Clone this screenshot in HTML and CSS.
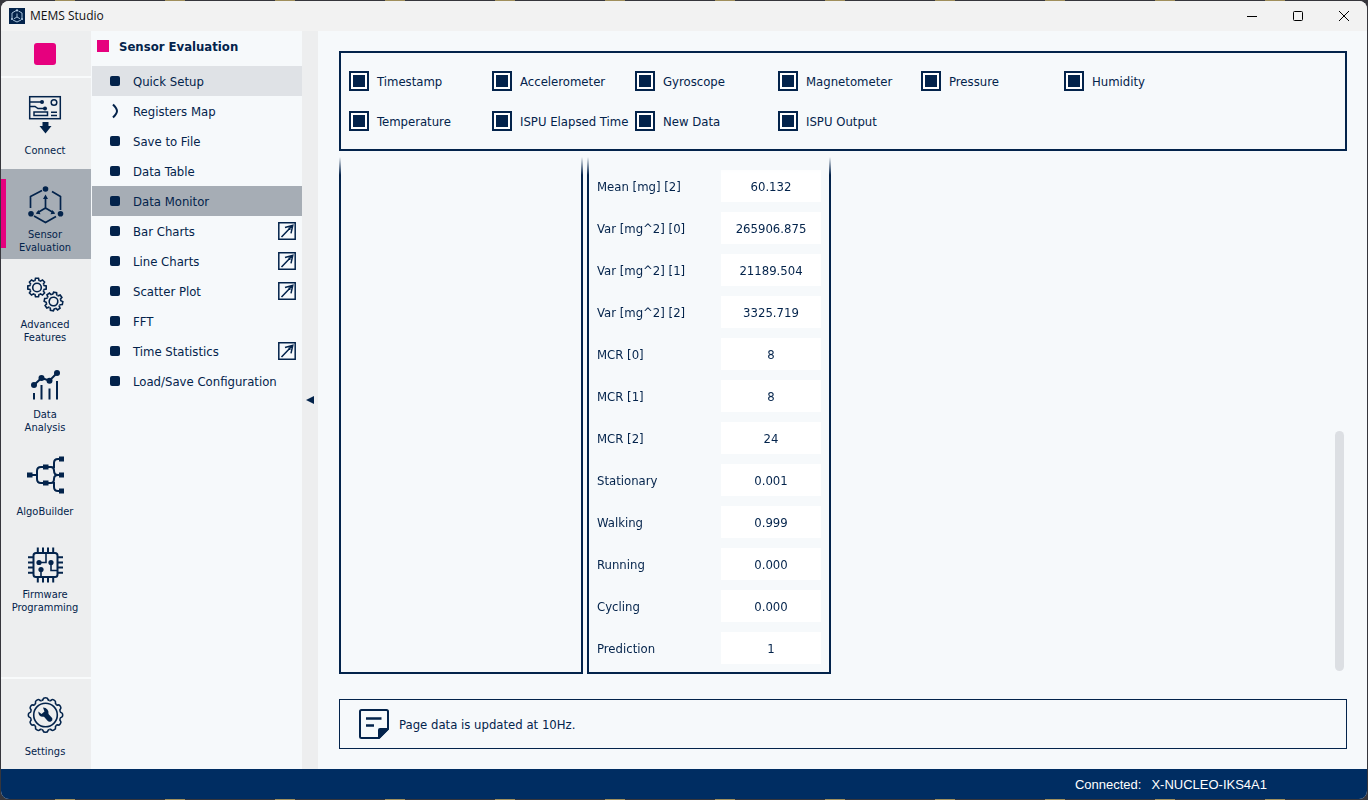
FILE: index.html
```html
<!DOCTYPE html>
<html lang="en">
<head>
<meta charset="utf-8">
<title>MEMS Studio</title>
<link rel="stylesheet" href="styles.css">
</head>
<body>
<svg class="defs" aria-hidden="true">
  <defs>
    <path id="tooth" d="M-2.8 -6.8L-2 -7.1L-1.5 -9.2H1.5L2 -7.1L2.8 -6.8"/>
    <g id="gear">
      <use href="#tooth"/><use href="#tooth" transform="rotate(45)"/><use href="#tooth" transform="rotate(90)"/><use href="#tooth" transform="rotate(135)"/><use href="#tooth" transform="rotate(180)"/><use href="#tooth" transform="rotate(225)"/><use href="#tooth" transform="rotate(270)"/><use href="#tooth" transform="rotate(315)"/>
      <circle r="4.3"/>
    </g>
    <path id="wave" d="M-3.9 -14.5Q-2.5 -14.8 -2.3 -16Q-2.1 -17.2 0 -17.2Q2.1 -17.2 2.3 -16Q2.5 -14.8 3.9 -14.5"/>
    <g id="quarter"><use href="#wave"/><use href="#wave" transform="rotate(30)"/><use href="#wave" transform="rotate(60)"/></g>
    <symbol id="popout" viewBox="0 0 20 20"><path fill="none" stroke="currentColor" stroke-width="1.500" d="M1.800 1.800H18.200V18.200H1.800ZM4.500 16L15.500 4.500M8 6.500L15.800 4.300L14 12.300M11.500 6.800L13.500 8.500"/></symbol>
  </defs>
</svg>
<div class="window">
  <header class="titlebar">
    <svg class="app-icon" viewBox="0 0 16 16"><rect width="16" height="16" fill="#03234b"/><g fill="none" stroke="#b9d3ea" stroke-width=".9"><path d="M7 2.600L3 5V10M9.500 3L13 5V10M4 12L8 14L12 12M8 5.500V9L5 10.700M8 9L11 10.700"/></g><g fill="#b9d3ea"><circle cx="8" cy="2.400" r="1.100"/><circle cx="3" cy="11" r="1.100"/><circle cx="13" cy="11" r="1.100"/></g></svg>
    <h1 class="app-name">MEMS Studio</h1>
    <div class="window-buttons">
      <button aria-label="Minimize"><svg viewBox="0 0 12 12"><path d="M1 6.500H11"/></svg></button>
      <button aria-label="Maximize"><svg viewBox="0 0 12 12"><rect x="1.500" y="1.500" width="9" height="9" rx="1"/></svg></button>
      <button aria-label="Close"><svg viewBox="0 0 12 12"><path d="M1 1L11 11M11 1L1 11"/></svg></button>
    </div>
  </header>

  <div class="workspace">
    <nav class="rail" aria-label="Sections">
      <div class="rail-stop"><button class="stop" aria-label="Stop"></button></div>
      <button class="rail-item">
        <svg class="rail-icon" viewBox="0 0 40 40"><g fill="none" stroke="currentColor" stroke-width="1.500"><rect x="4.700" y="2.700" width="30.600" height="22"/><path d="M5 8H16M5 12.500H10L13 14.500H19"/><circle cx="29" cy="8.500" r="2.800"/><path d="M9 18H22.500V21.500H9ZM26 18.300H32M26 21.500H32"/></g><g fill="currentColor"><circle cx="17" cy="8" r="2"/><circle cx="20" cy="14.500" r="2"/><path d="M17.500 28H23.500V32H26.500L20.500 39.500L14.500 32H17.500Z"/></g></svg>
        <span class="rail-label">Connect</span>
      </button>
      <button class="rail-item active">
        <svg class="rail-icon" viewBox="0 0 40 40"><g fill="none" stroke="currentColor" stroke-width="1.700"><path d="M17 5.500L5.500 11.500V23M27 6.500L35.500 11.500V25M9 31L20.500 37.500L31 31.500M20.500 12V23L12 28M20.500 23L29 28"/></g><g fill="currentColor"><circle cx="20.500" cy="4" r="2.800"/><circle cx="6" cy="28.700" r="2.800"/><circle cx="35.500" cy="28.700" r="2.800"/><path d="M20.500 9.500L23 14H18ZM10.800 28.800L13.500 25L15.500 29.300ZM30.200 28.800L27.500 25L25.500 29.300Z"/></g></svg>
        <span class="rail-label">Sensor<br>Evaluation</span>
      </button>
      <button class="rail-item">
        <svg class="rail-icon" viewBox="0 0 40 40"><g fill="none" stroke="currentColor" stroke-width="1.600"><use href="#gear" transform="translate(12 12.500)"/><use href="#gear" transform="translate(28.500 26.500) rotate(10)"/></g></svg>
        <span class="rail-label">Advanced<br>Features</span>
      </button>
      <button class="rail-item">
        <svg class="rail-icon" viewBox="0 0 40 40"><g fill="none" stroke="currentColor" stroke-width="2"><path d="M9 20L16.500 13L24.500 15.700L32 8M9 28V34.500M16.500 20V34.500M24.500 23.500V34.500M32 16V34.500"/></g><g fill="currentColor"><circle cx="9" cy="20" r="3"/><circle cx="16.500" cy="13" r="3"/><circle cx="24.500" cy="15.700" r="3"/><circle cx="32" cy="8" r="3"/></g></svg>
        <span class="rail-label">Data<br>Analysis</span>
      </button>
      <button class="rail-item">
        <svg class="rail-icon" viewBox="0 0 40 40"><g fill="none" stroke="currentColor" stroke-width="2"><path d="M5 20H11M20 12H16Q12 12 12 16V24Q12 28 16 28H20M22 12H26Q29 12 29 15.500Q29 20 33 20H36M22 28H26Q29 28 29 24Q29 20 33 20M29 13V8Q29 4 33 4H36M29 27V32Q29 36 33 36H36"/></g><path fill="currentColor" d="M2 17.500H7.500V22.500H2ZM18 9.500H23.500V14.500H18ZM18 25.500H23.500V30.500H18ZM34 1.500H39V6.500H34ZM34 17.500H39V22.500H34ZM34 33.500H39V38.500H34Z"/></svg>
        <span class="rail-label">AlgoBuilder</span>
      </button>
      <button class="rail-item">
        <svg class="rail-icon" viewBox="0 0 40 40"><g fill="none" stroke="currentColor" stroke-width="2"><rect x="8.500" y="8" width="24" height="24" rx="2.500"/><path d="M12.800 8V2.500M18 8V2.500M23 8V2.500M28.200 8V2.500M12.800 37.500V32M18 37.500V32M23 37.500V32M28.200 37.500V32M8 12.300H3M8 17.500H3M8 22.500H3M8 27.700H3M38 12.300H33M38 17.500H33M38 22.500H33M38 27.700H33"/><path stroke-width="1.600" d="M21 8V17.500H15M26 17.500V25.500H32M16 24.500V32"/></g><g fill="currentColor"><circle cx="14" cy="17.500" r="2.600"/><circle cx="26" cy="17.500" r="2.600"/><circle cx="16" cy="24.500" r="2.600"/></g></svg>
        <span class="rail-label">Firmware<br>Programming</span>
      </button>
      <button class="rail-item settings">
        <svg class="rail-icon" viewBox="0 0 40 40"><g transform="translate(20.500 20)"><g fill="none" stroke="currentColor" stroke-width="1.600"><use href="#quarter"/><use href="#quarter" transform="rotate(90)"/><use href="#quarter" transform="rotate(180)"/><use href="#quarter" transform="rotate(270)"/><circle r="11.800"/></g><path fill="currentColor" d="M-2.500 -7.500Q3.500 -7 3 -1L6.800 3.200Q7.500 5.500 5.500 6.500Q3.500 7.500 2 5.800L-1.500 1.800Q-7 2.500 -7.200 -3.500L-4 -1L-1 -3.500Z"/></g></svg>
        <span class="rail-label">Settings</span>
      </button>
    </nav>

    <nav class="panel" aria-label="Sensor Evaluation">
      <h2 class="panel-title">Sensor Evaluation</h2>
      <button class="nav-item hover"><i class="bullet"></i>Quick Setup</button>
      <button class="nav-item"><svg class="chevron" viewBox="0 0 10 16"><path d="M3 1.500Q7 5.500 7 8T3 14.500"/></svg>Registers Map</button>
      <button class="nav-item"><i class="bullet"></i>Save to File</button>
      <button class="nav-item"><i class="bullet"></i>Data Table</button>
      <button class="nav-item selected"><i class="bullet"></i>Data Monitor</button>
      <button class="nav-item"><i class="bullet"></i>Bar Charts<svg class="popout"><use href="#popout"/></svg></button>
      <button class="nav-item"><i class="bullet"></i>Line Charts<svg class="popout"><use href="#popout"/></svg></button>
      <button class="nav-item"><i class="bullet"></i>Scatter Plot<svg class="popout"><use href="#popout"/></svg></button>
      <button class="nav-item"><i class="bullet"></i>FFT</button>
      <button class="nav-item"><i class="bullet"></i>Time Statistics<svg class="popout"><use href="#popout"/></svg></button>
      <button class="nav-item"><i class="bullet"></i>Load/Save Configuration</button>
    </nav>
    <button class="collapse" aria-label="Collapse panel"><svg viewBox="0 0 8 8"><path d="M8 0V8L0 4Z"/></svg></button>

    <main class="content">
      <section class="filters">
        <label class="check"><input type="checkbox" checked>Timestamp</label>
        <label class="check"><input type="checkbox" checked>Accelerometer</label>
        <label class="check"><input type="checkbox" checked>Gyroscope</label>
        <label class="check"><input type="checkbox" checked>Magnetometer</label>
        <label class="check"><input type="checkbox" checked>Pressure</label>
        <label class="check"><input type="checkbox" checked>Humidity</label>
        <label class="check"><input type="checkbox" checked>Temperature</label>
        <label class="check"><input type="checkbox" checked>ISPU Elapsed Time</label>
        <label class="check"><input type="checkbox" checked>New Data</label>
        <label class="check"><input type="checkbox" checked>ISPU Output</label>
      </section>

      <section class="monitor">
        <div class="card"></div>
        <div class="card">
          <label class="reading">Mean [mg] [2]<input readonly value="60.132"></label>
          <label class="reading">Var [mg^2] [0]<input readonly value="265906.875"></label>
          <label class="reading">Var [mg^2] [1]<input readonly value="21189.504"></label>
          <label class="reading">Var [mg^2] [2]<input readonly value="3325.719"></label>
          <label class="reading">MCR [0]<input readonly value="8"></label>
          <label class="reading">MCR [1]<input readonly value="8"></label>
          <label class="reading">MCR [2]<input readonly value="24"></label>
          <label class="reading">Stationary<input readonly value="0.001"></label>
          <label class="reading">Walking<input readonly value="0.999"></label>
          <label class="reading">Running<input readonly value="0.000"></label>
          <label class="reading">Cycling<input readonly value="0.000"></label>
          <label class="reading">Prediction<input readonly value="1"></label>
        </div>
        <div class="scroll-thumb"></div>
      </section>

      <section class="note">
        <svg class="note-icon" viewBox="0 0 30 30"><path fill="none" stroke="currentColor" stroke-width="2" stroke-linejoin="round" d="M2.500 1H27.500Q29 1 29 2.500V20L20 29H2.500Q1 29 1 27.500V2.500Q1 1 2.500 1Z"/><path fill="none" stroke="currentColor" stroke-width="2.400" d="M7 9.500H22.500M7 16.500H15"/><path fill="currentColor" d="M19 29V21Q19 19 21 19H29.500V20.500L20.500 29.500Z"/></svg>
        <p>Page data is updated at 10Hz.</p>
      </section>
    </main>
  </div>

  <footer class="statusbar"><span>Connected:</span><span>X-NUCLEO-IKS4A1</span></footer>
</div>
</body>
</html>
```
FILE: styles.css
```css
* { box-sizing: border-box; }

body {
  margin: 0;
  padding: 1px;
  height: 100vh;
  display: flex;
  background: linear-gradient(90deg, #36363c 0 50%, #a08f5c 0 68%, #36363c 0) 0 0 / 110px 100%;
  color: #03234b;
  font: 13px/17px "DejaVu Sans Condensed", "Noto Sans", sans-serif;
}

h1, h2, p { margin: 0; font: inherit; }

button {
  border: 0;
  padding: 0;
  background: none;
  color: inherit;
  font: inherit;
}

.defs { position: absolute; width: 0; height: 0; }

.window {
  flex: 1;
  min-width: 0;
  display: flex;
  flex-direction: column;
  border-radius: 8px;
  overflow: hidden;
  background: #f6f9fb;
}

/* title bar */
.titlebar {
  flex: none;
  display: flex;
  align-items: center;
  height: 30px;
  padding-left: 8px;
  background: #f2f2f2;
  color: #111;
}
.app-icon { width: 16px; height: 16px; margin-right: 5px; }
.app-name { font: 12px/16px "Open Sans", sans-serif; }
.window-buttons { display: flex; margin-left: auto; }
.window-buttons button {
  display: flex;
  align-items: center;
  justify-content: center;
  width: 46px;
  height: 28px;
}
.window-buttons svg { width: 12px; height: 12px; fill: none; stroke: #000; stroke-width: 1; }

.workspace { flex: 1; display: flex; min-height: 0; }

/* icon rail */
.rail {
  flex: none;
  width: 90px;
  display: flex;
  flex-direction: column;
  background: #edeeef;
}
.rail-stop {
  display: flex;
  align-items: center;
  justify-content: center;
  height: 47px;
  padding-right: 2px;
  border-bottom: 2px solid #f8fafb;
}
.stop { width: 22px; height: 22px; border-radius: 3px; background: #e6007e; }
.rail-item {
  display: flex;
  flex-direction: column;
  align-items: center;
  height: 90px;
  padding: 16px 2px 0 0;
}
.rail-stop + .rail-item { height: 91px; }
.rail-item.active {
  background: #a6adb5;
  border-left: 5px solid #e6007e;
  border-image: linear-gradient(#a6adb5 11px, #e6007e 11px 78px, #a6adb5 78px) 1 / 0 0 0 5px;
  padding-right: 7px;
}
.rail-icon { width: 40px; height: 40px; }
.rail-label {
  flex: 1;
  display: flex;
  align-items: center;
  max-height: 32px;
  font-size: 11px;
  line-height: 13px;
}
.rail-item.settings {
  height: 92px;
  margin-top: auto;
  border-top: 2px solid #f8fafb;
}

/* section panel */
.panel { flex: none; width: 211px; padding-left: 1px; }
.panel-title {
  display: flex;
  align-items: center;
  gap: 10px;
  height: 30px;
  margin-bottom: 5px;
  padding-left: 5px;
  font-weight: bold;
}
.panel-title::before { content: ""; width: 12px; height: 12px; background: #e6007e; }
.nav-item {
  display: flex;
  align-items: center;
  width: 100%;
  height: 30px;
  padding: 0 5px 0 18px;
  text-align: left;
}
.nav-item.hover { background: #dfe2e6; }
.nav-item.selected { background: #a6adb5; }
.bullet { width: 10px; height: 10px; margin-right: 13px; border-radius: 2px; background: #03234b; }
.chevron { width: 10px; height: 16px; margin-right: 13px; fill: none; stroke: #03234b; stroke-width: 2; }
.popout { width: 20px; height: 20px; margin-left: auto; }

.collapse {
  flex: none;
  display: flex;
  align-items: center;
  justify-content: center;
  width: 16px;
  background: #edeeef;
}
.collapse svg { width: 8px; height: 8px; fill: #03234b; }

/* content */
.content {
  flex: 1;
  min-width: 0;
  display: flex;
  flex-direction: column;
  padding: 20px 20px 20px 21px;
}
.filters {
  display: grid;
  grid-template-columns: repeat(auto-fill, 143px);
  grid-auto-rows: 40px;
  padding: 8px 130px 8px 8px;
  border: 2px solid #03234b;
}
.check { display: flex; align-items: center; gap: 8px; white-space: nowrap; }
.check input {
  appearance: none;
  flex: none;
  width: 20px;
  height: 20px;
  margin: 0;
  padding: 2px;
  border: 2px solid #03234b;
  background: #fff;
}
.check input:checked { background: linear-gradient(#03234b, #03234b) content-box, #fff; }

.monitor {
  flex: 1;
  display: flex;
  gap: 4px;
  min-height: 0;
  margin: 6px 0 25px;
}
.card {
  display: flex;
  flex-direction: column;
  justify-content: flex-end;
  gap: 10px;
  width: 244px;
  padding: 8px;
  border: 2px solid #03234b;
  border-top: 0;
  mask-image: linear-gradient(transparent, #000 18px);
}
.reading { display: flex; align-items: center; justify-content: space-between; }
.reading input {
  width: 100px;
  height: 32px;
  padding: 0;
  border: 0;
  background: #fff;
  color: inherit;
  font: inherit;
  text-align: center;
}
.scroll-thumb {
  align-self: flex-end;
  width: 9px;
  height: 240px;
  margin: 0 3px 3px auto;
  border-radius: 5px;
  background: #dcdfe3;
}

.note {
  display: flex;
  align-items: center;
  gap: 10px;
  height: 50px;
  padding: 0 19px;
  border: 1px solid #03234b;
}
.note-icon { width: 30px; height: 30px; }

.statusbar {
  flex: none;
  display: flex;
  align-items: center;
  justify-content: flex-end;
  gap: 10px;
  height: 30px;
  padding-right: 100px;
  background: #002d62;
  color: #fff;
  font: 13px/17px "Liberation Sans", sans-serif;
}
```
